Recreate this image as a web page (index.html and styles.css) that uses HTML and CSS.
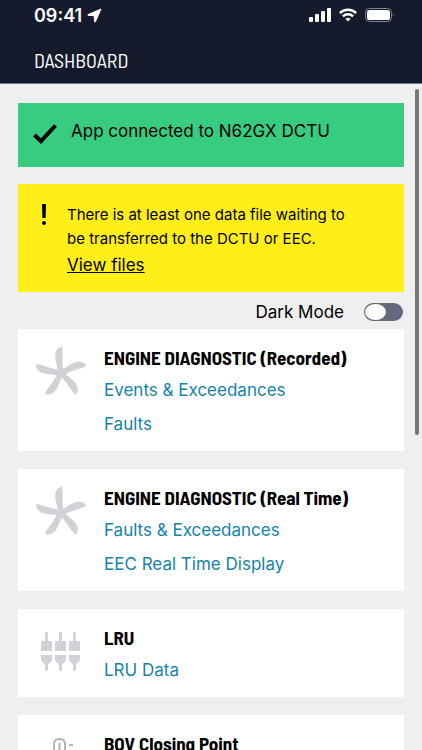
FILE: index.html
```html
<!DOCTYPE html>
<html lang="en">
<head>
  <meta charset="utf-8">
  <meta name="viewport" content="width=device-width, initial-scale=1">
  <link rel="stylesheet" href="styles.css">
  <title>Dashboard</title>
</head>
<body>
  <header class="header">
    <div class="status-bar">
      <span class="time">09:41</span>
      <svg class="location" width="15" height="15" viewBox="0 0 15 15"><path d="M14 1 L1 6.6 Q0.5 7.2 1.2 7.4 L7.2 7.6 L7.5 13.6 Q7.8 14.5 8.4 13.8 Z" fill="#fff" stroke="#fff" stroke-linejoin="round"/></svg>
      <div class="status-icons">
        <svg width="22" height="14" viewBox="0 0 22 14" fill="#fff">
          <rect x="0" y="9" width="4" height="5" rx="1"/>
          <rect x="6" y="6" width="4" height="8" rx="1"/>
          <rect x="12" y="3" width="4" height="11" rx="1"/>
          <rect x="18" y="0" width="4" height="14" rx="1"/>
        </svg>
        <svg width="18" height="14" viewBox="0 0 18 14" fill="none" stroke="#fff" stroke-width="2.4">
          <path d="M0.8 5.1 A11.6 11.6 0 0 1 17.2 5.1"/>
          <path d="M3.9 8.3 A7.2 7.2 0 0 1 14.1 8.3"/>
          <path d="M9 13.6 L6.4 11 A3.7 3.7 0 0 1 11.6 11 Z" fill="#fff" stroke="none"/>
        </svg>
        <svg width="29" height="14" viewBox="0 0 29 14">
          <rect x="0.5" y="0.5" width="26" height="13" rx="4" fill="none" stroke="#7f838d"/>
          <rect x="2" y="2" width="23" height="10" rx="2.6" fill="#fff"/>
          <path d="M27.8 5 Q29.2 7 27.8 9 Z" fill="#7f838d"/>
        </svg>
      </div>
    </div>
    <h1 class="title">DASHBOARD</h1>
  </header>

  <main class="content">
    <div class="scrollbar"></div>

    <section class="alert connected">
      <svg width="26" height="22" viewBox="0 0 26 22"><path d="M2.5 12 L9 18.2 L23.5 2.5" fill="none" stroke="#000" stroke-width="4"/></svg>
      <p>App connected to N62GX DCTU</p>
    </section>

    <section class="alert waiting">
      <svg width="24" height="22" viewBox="0 0 24 22"><path d="M10 1 H14 L13.6 15 H10.4 Z"/><circle cx="12" cy="20" r="2"/></svg>
      <div>
        <p>There is at least one data file waiting to be transferred to the DCTU or EEC.</p>
        <a href="#">View files</a>
      </div>
    </section>

    <div class="mode">
      <label for="darkMode">Dark Mode</label>
      <input type="checkbox" id="darkMode" class="switch">
    </div>

    <svg class="defs" width="0" height="0">
      <defs>
        <path id="blade" d="M22.8 26 C22.6 19 20.1 16 20.2 10 C20.4 5 22.5 1.5 27 0.6 C27.9 4 27.5 9 27.500 14 C27.500 18 27.8 21 28.5 26 Z"/>
        <g id="propeller" fill="#d1d1d8">
          <use href="#blade"/>
          <use href="#blade" transform="rotate(72 26 27)"/>
          <use href="#blade" transform="rotate(144 26 27)"/>
          <use href="#blade" transform="rotate(216 26 27)"/>
          <use href="#blade" transform="rotate(288 26 27)"/>
          <circle cx="26" cy="27" r="5.5"/>
        </g>
        <g id="plug">
          <path d="M4 1 Q4 0 5.500 0 Q7 0 7 1 V9 H10 Q11 9 11 10 V19 H0 V10 Q0 9 1 9 H4 Z"/>
          <path d="M0 23 H11 V27 Q11 30 7 32 V37.500 Q7 39 5.500 39 Q4 39 4 37.500 V32 Q0 30 0 27 Z"/>
        </g>
      </defs>
    </svg>

    <section class="card">
      <div class="icon"><svg width="52" height="52" viewBox="0 0 52 52"><use href="#propeller"/></svg></div>
      <div class="links">
        <h2>ENGINE DIAGNOSTIC (Recorded)</h2>
        <a href="#">Events &amp; Exceedances</a>
        <a href="#">Faults</a>
      </div>
    </section>

    <section class="card">
      <div class="icon"><svg width="52" height="52" viewBox="0 0 52 52"><use href="#propeller"/></svg></div>
      <div class="links">
        <h2>ENGINE DIAGNOSTIC (Real Time)</h2>
        <a href="#">Faults &amp; Exceedances</a>
        <a href="#">EEC Real Time Display</a>
      </div>
    </section>

    <section class="card">
      <div class="icon">
        <svg width="52" height="52" viewBox="0 0 52 52" fill="#d1d1d8">
          <use href="#plug" x="6" y="6"/>
          <use href="#plug" x="20" y="6"/>
          <use href="#plug" x="34" y="6"/>
        </svg>
      </div>
      <div class="links">
        <h2>LRU</h2>
        <a href="#">LRU Data</a>
      </div>
    </section>

    <section class="card">
      <div class="icon">
        <svg width="52" height="52" viewBox="0 0 52 52" fill="none" stroke="#b4b4b9" stroke-width="2">
          <path d="M19 40 V12 Q19 7 24.500 7 Q30 7 30 12 V40"/>
          <path d="M24.500 11 V40 M34 13 H38"/>
        </svg>
      </div>
      <div class="links">
        <h2>BOV Closing Point</h2>
        <a href="#">BOV Data</a>
      </div>
    </section>
  </main>
</body>
</html>
```

FILE: styles.css
```css
* {
  box-sizing: border-box;
}

body {
  display: flex;
  flex-direction: column;
  height: 100vh;
  margin: 0;
  overflow: hidden;
  font-family: Inter, sans-serif;
  font-size: 17px;
  color: #000;
  background-color: #efefef;
}

h1, h2, p {
  margin: 0;
}

.header {
  flex: none;
  padding: 4px 28px 9px 34px;
  color: #fff;
  background-color: #151b2d;
  border-bottom: 1px solid #70747e;
}

.status-bar {
  display: flex;
  align-items: center;
  height: 22px;
}

.time {
  font-size: 18px;
  font-weight: 600;
}

.location {
  margin-left: 5px;
}

.status-icons {
  display: flex;
  gap: 8px;
  margin-left: auto;
}

.title {
  margin-top: 21px;
  font-family: "Barlow Semi Condensed", "Roboto Condensed", "Liberation Sans Narrow", sans-serif;
  font-size: 20px;
  font-weight: 400;
  line-height: 27px;
}

.content {
  position: relative;
  flex: 1;
  min-height: 0;
  padding: 19px 18px 0;
  overflow: hidden;
}

.scrollbar {
  position: absolute;
  top: 5px;
  right: 3px;
  width: 4px;
  height: 52%;
  background-color: #777;
  border-radius: 2px;
}

.alert {
  display: flex;
}

.alert svg {
  flex: none;
}

.alert a {
  color: #000;
  line-height: 28px;
}

.connected {
  gap: 13px;
  padding: 16px 14px 22px;
  background-color: #37cc80;
}

.connected svg {
  margin-top: 4px;
}

.connected p {
  line-height: 24px;
}

.waiting {
  gap: 11px;
  margin-top: 17px;
  padding: 19px 40px 13px 14px;
  background-color: #ffee17;
}

.waiting p {
  font-size: 15px;
  line-height: 24px;
}

.mode {
  display: flex;
  align-items: center;
  justify-content: flex-end;
  gap: 20px;
  height: 37px;
  padding-top: 3px;
}

.switch {
  appearance: none;
  display: flex;
  width: 39px;
  height: 18px;
  margin: 0 1px 0 0;
  padding: 1px;
  background-color: #66697d;
  border-radius: 9px;
  cursor: pointer;
}

.switch::before {
  content: "";
  width: 21px;
  background-color: #fff;
  border-radius: 50%;
}

.switch:checked {
  justify-content: flex-end;
}

.defs {
  position: absolute;
}

.card {
  display: flex;
  gap: 17px;
  margin-bottom: 18px;
  padding: 17px;
  background-color: #fff;
}

.icon {
  flex: none;
  height: 52px;
}

.links {
  display: flex;
  flex-direction: column;
  align-items: flex-start;
  margin-bottom: -7px;
}

.links h2 {
  margin-bottom: 3px;
  font-family: "Barlow Semi Condensed", "Roboto Condensed", "Liberation Sans Narrow", sans-serif;
  font-size: 19px;
  font-weight: 700;
  line-height: 24px;
}

.links a {
  color: #1583a8;
  line-height: 34px;
  text-decoration: none;
}
```
